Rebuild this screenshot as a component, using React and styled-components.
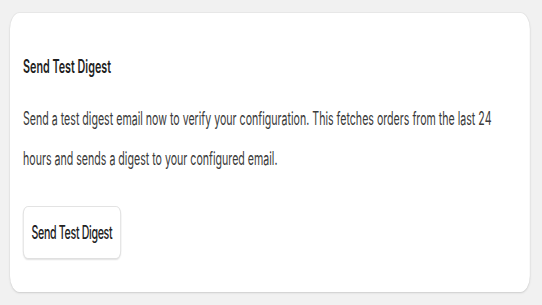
import React from 'react';
import styled, { createGlobalStyle } from 'styled-components';

// the reference is squeezed sideways, so the whole page is laid out wide and narrowed
const SX = 0.59;

const GlobalStyle = createGlobalStyle`
  html, body {
    margin: 0;
    padding: 0;
    background: #f1f1f1;
    overflow: hidden;
  }
  body {
    font-family: Inter, "Noto Sans", sans-serif;
  }
`;

const Stage = styled.div`
  width: ${542 / SX}px;
  height: 305px;
  transform: scaleX(${SX});
  transform-origin: 0 0;
  padding: 13px ${12 / SX}px 0 ${10 / SX}px;
  box-sizing: border-box;
`;

const Card = styled.section`
  background: #fff;
  border-radius: 16px;
  height: 279px;
  box-sizing: border-box;
  padding: 41px ${13 / SX}px 0;
  box-shadow: 0 1px 3px rgba(0, 0, 0, 0.12), 0 0 0 1px rgba(0, 0, 0, 0.03);
`;

const Title = styled.h3`
  margin: 0;
  font-size: 18.3px;
  line-height: 24px;
  font-weight: 600;
  color: #1f1f1f;
`;

const Text = styled.p`
  margin: 21px 0 0;
  font-size: 18px;
  line-height: 40px;
  font-weight: 400;
  color: #3b3b3b;
`;

const Button = styled.button`
  margin-top: 27px;
  height: 53px;
  padding: 0 ${8 / SX}px;
  border: 1px solid #dcdcdc;
  border-radius: 8px;
  background: #fff;
  box-shadow: 0 1px 2px rgba(0, 0, 0, 0.12);
  font-family: inherit;
  font-size: 18px;
  font-weight: 500;
  letter-spacing: -0.55px;
  color: #222;
  cursor: pointer;
`;

export default function App() {
  return (
    <>
      <GlobalStyle />
      <Stage>
        <Card>
          <Title>Send Test Digest</Title>
          <Text>
            Send a test digest email now to verify your configuration. This fetches orders from the last 24
            hours and sends a digest to your configured email.
          </Text>
          <Button type="button">Send Test Digest</Button>
        </Card>
      </Stage>
    </>
  );
}
